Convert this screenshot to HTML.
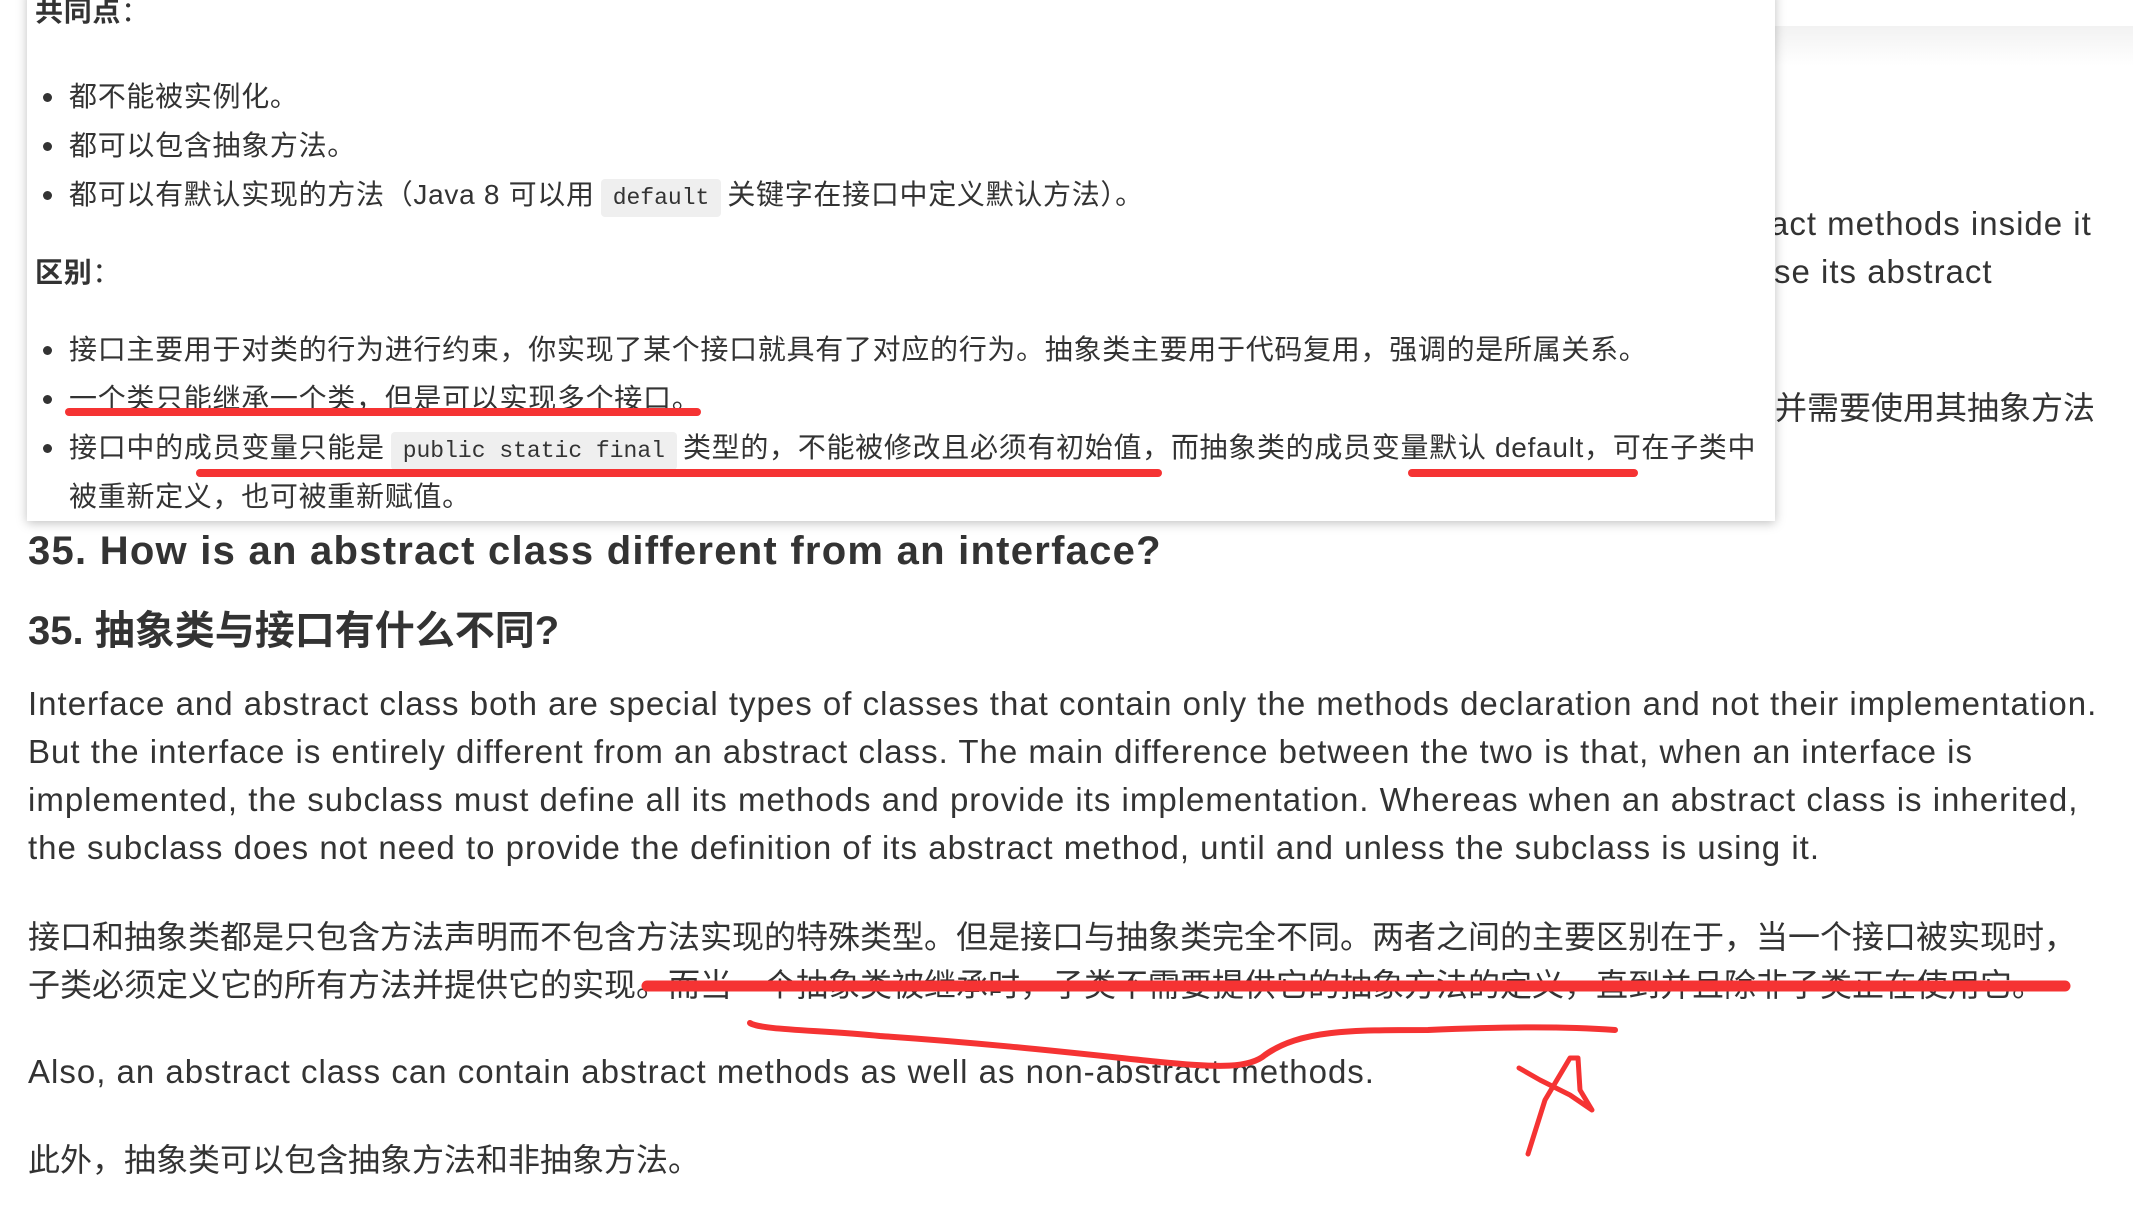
<!DOCTYPE html>
<html><head><meta charset="utf-8"><style>
*{margin:0;padding:0;box-sizing:border-box}
body{width:2133px;height:1205px;overflow:hidden;background:#fff;position:relative;font-family:"Liberation Sans","Noto Sans CJK SC",sans-serif;color:#333}
.l{position:absolute;white-space:nowrap}
.b{font-size:32px;left:28px;line-height:40px}
.e{font-size:33px;letter-spacing:1px}
.p{font-size:28px;line-height:36px;letter-spacing:.7px}
.card{position:absolute;left:27px;top:-10px;width:1748px;height:531px;background:#fff;box-shadow:0 2px 10px rgba(0,0,0,.25);overflow:hidden}
.dot{position:absolute;width:9px;height:9px;border-radius:50%;background:#333}
code{font-family:"Liberation Mono",monospace;font-size:23px;background:#efefef;border-radius:4px;padding:6px 12px;margin:0 6px;letter-spacing:0}
</style></head><body>
<div style="position:absolute;left:1775px;top:26px;width:358px;height:40px;background:linear-gradient(#f2f2f2,#fff)"></div>
<div class="l b e" style="left:1758px;top:204px">ract methods inside it</div>
<div class="l b e" style="left:1774px;top:252px">se its abstract</div>
<div class="l b" style="left:1775px;top:388px">并需要使用其抽象方法</div>

<div class="card">
<div style="position:absolute;left:0;top:2px;width:100%;height:100%">
<div class="l p" style="left:8px;top:2px;font-weight:bold">共同点<span style="font-weight:normal">：</span></div>
<div class="dot" style="left:16px;top:101px"></div><div class="l p" style="left:42px;top:87px">都不能被实例化。</div>
<div class="dot" style="left:16px;top:150px"></div><div class="l p" style="left:42px;top:136px">都可以包含抽象方法。</div>
<div class="dot" style="left:16px;top:199px"></div><div class="l p" style="left:42px;top:185px">都可以有默认实现的方法（Java 8 可以用<code>default</code>关键字在接口中定义默认方法）。</div>
<div class="l p" style="left:8px;top:263px;font-weight:bold">区别<span style="font-weight:normal">：</span></div>
<div class="dot" style="left:16px;top:354px"></div><div class="l p" style="left:42px;top:340px">接口主要用于对类的行为进行约束，你实现了某个接口就具有了对应的行为。抽象类主要用于代码复用，强调的是所属关系。</div>
<div class="dot" style="left:16px;top:403px"></div><div class="l p" style="left:42px;top:389px">一个类只能继承一个类，但是可以实现多个接口。</div>
<div class="dot" style="left:16px;top:452px"></div><div class="l p" style="left:42px;top:438px">接口中的成员变量只能是<code>public static final</code>类型的，不能被修改且必须有初始值，而抽象类的成员变量默认 default，可在子类中</div>
<div class="l p" style="left:42px;top:487px">被重新定义，也可被重新赋值。</div>
</div>
</div>

<div class="l" style="left:28px;top:528px;font-size:40px;font-weight:bold;line-height:46px;letter-spacing:1.25px">35. How is an abstract class different from an interface?</div>
<div class="l" style="left:28px;top:608px;font-size:40px;font-weight:bold;line-height:46px">35. 抽象类与接口有什么不同?</div>
<div class="l b e" style="top:684px">Interface and abstract class both are special types of classes that contain only the methods declaration and not their implementation.</div>
<div class="l b e" style="top:732px">But the interface is entirely different from an abstract class. The main difference between the two is that, when an interface is</div>
<div class="l b e" style="top:780px">implemented, the subclass must define all its methods and provide its implementation. Whereas when an abstract class is inherited,</div>
<div class="l b e" style="top:828px">the subclass does not need to provide the definition of its abstract method, until and unless the subclass is using it.</div>
<div class="l b" style="top:917px">接口和抽象类都是只包含方法声明而不包含方法实现的特殊类型。但是接口与抽象类完全不同。两者之间的主要区别在于，当一个接口被实现时，</div>
<div class="l b" style="top:965px">子类必须定义它的所有方法并提供它的实现。而当一个抽象类被继承时，子类不需要提供它的抽象方法的定义，直到并且除非子类正在使用它。</div>
<div class="l b e" style="top:1052px">Also, an abstract class can contain abstract methods as well as non-abstract methods.</div>
<div class="l b" style="top:1140px">此外，抽象类可以包含抽象方法和非抽象方法。</div>

<svg style="position:absolute;left:0;top:0" width="2133" height="1205">
<g stroke="#f53333" fill="none" stroke-linecap="round" stroke-linejoin="round">
<line x1="69" y1="412" x2="697" y2="412" stroke-width="8"/>
<line x1="200" y1="473" x2="1158" y2="473" stroke-width="8"/>
<line x1="1412" y1="473" x2="1634" y2="473" stroke-width="8"/>
<line x1="647" y1="986" x2="2065" y2="986" stroke-width="11"/>
<path d="M750 1023 C760 1030 820 1030 880 1036 C1000 1044 1100 1056 1160 1062 C1220 1068 1250 1068 1265 1055 C1300 1030 1350 1030 1428 1030 C1500 1027 1560 1026 1615 1030" stroke-width="6"/>
<path d="M1528 1154 L1545 1100 L1570 1058 L1578 1058 L1580 1090 L1592 1110 L1570 1095 L1540 1080 L1519 1068" stroke-width="5"/>
</g></svg>
</body></html>
